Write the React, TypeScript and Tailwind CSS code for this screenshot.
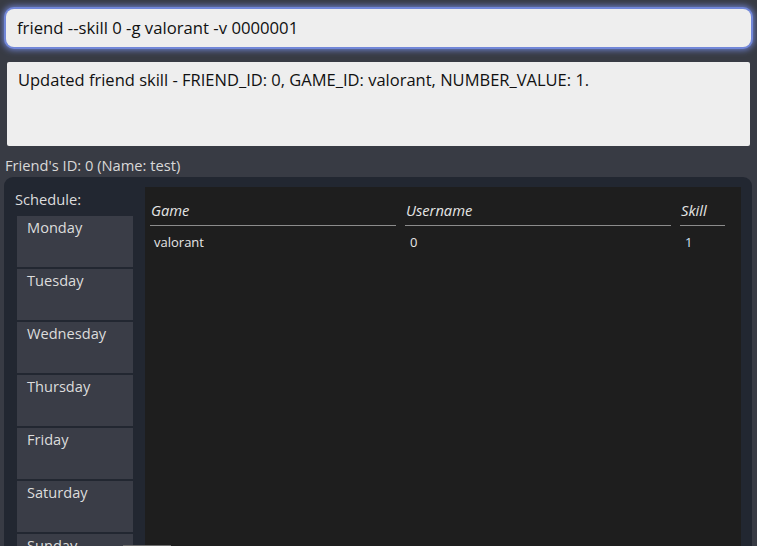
import React from "react"

const days = ["Monday", "Tuesday", "Wednesday", "Thursday", "Friday", "Saturday", "Sunday"]

export default function App() {
  return (
    <div
      className="relative h-[546px] w-[757px] overflow-hidden bg-[#383b44] text-[#dcdcdc]"
      style={{ fontFamily: '"Open Sans", "Noto Sans", sans-serif' }}
    >
      {/* command input */}
      <div className="px-[6px] pt-[9px]">
        <div className="flex h-[38px] items-center rounded-[8px] bg-[#eeeeee] px-[11px] text-[16.7px] text-[#111] shadow-[0_0_0_2px_#7287d8,0_0_6px_3px_#6f82cf]">
          friend --skill 0 -g valorant -v 0000001
        </div>
      </div>

      {/* result output */}
      <div className="mx-[7px] mt-[15px] h-[84px] rounded-[2px] bg-[#eeeeee] px-[11px] pt-[6px] text-[16.5px] text-[#111]">
        Updated friend skill - FRIEND_ID: 0, GAME_ID: valorant, NUMBER_VALUE: 1.
      </div>

      <div className="mt-[9px] pl-[5px] text-[14.7px] leading-[20px] text-[#d8d8d8]">
        Friend&apos;s ID: 0 (Name: test)
      </div>

      {/* friend panel */}
      <div className="ml-[4px] mr-[5px] mt-[2px] flex h-[400px] gap-[8px] rounded-t-[9px] bg-[#222731] pl-[11px] pr-[11px] pt-[10px]">
        <div className="flex w-[122px] flex-col">
          <div className="pt-[1px] text-[14.7px] leading-[22px] text-[#dcdcdc]">Schedule:</div>
          <div className="ml-[2px] mt-[6px] flex flex-col gap-[2px]">
            {days.map((d) => (
              <div key={d} className="h-[51px] w-[116px] bg-[#3a3d47] pl-[10px] text-[14.6px] leading-[22px] text-[#dcdcdc]">
                {d}
              </div>
            ))}
          </div>
        </div>

        <div className="flex-1 bg-[#1e1e1e] pl-[5px] pt-[12px]">
          <div className="grid grid-cols-[246px_266px_45px] gap-x-[9px]">
            {["Game", "Username", "Skill"].map((h) => (
              <div key={h} className="border-b border-[#8c8c8c] pb-[4px] pl-[1px] text-[14.7px] italic leading-[22px] text-[#e6e6e6]">
                {h}
              </div>
            ))}
            <div className="pl-[4px] pt-[6px] text-[13px] leading-[20px] text-[#e6e6e6]">valorant</div>
            <div className="pl-[5px] pt-[6px] text-[13px] leading-[20px] text-[#e6e6e6]">0</div>
            <div className="pl-[5px] pt-[6px] text-[13px] leading-[20px] text-[#cfe0f5]">1</div>
          </div>
        </div>
      </div>

      {/* scrollbar thumb */}
      <div className="absolute bottom-0 left-[123px] h-[1px] w-[48px] bg-[#6d6d6d]" />
    </div>
  )
}
